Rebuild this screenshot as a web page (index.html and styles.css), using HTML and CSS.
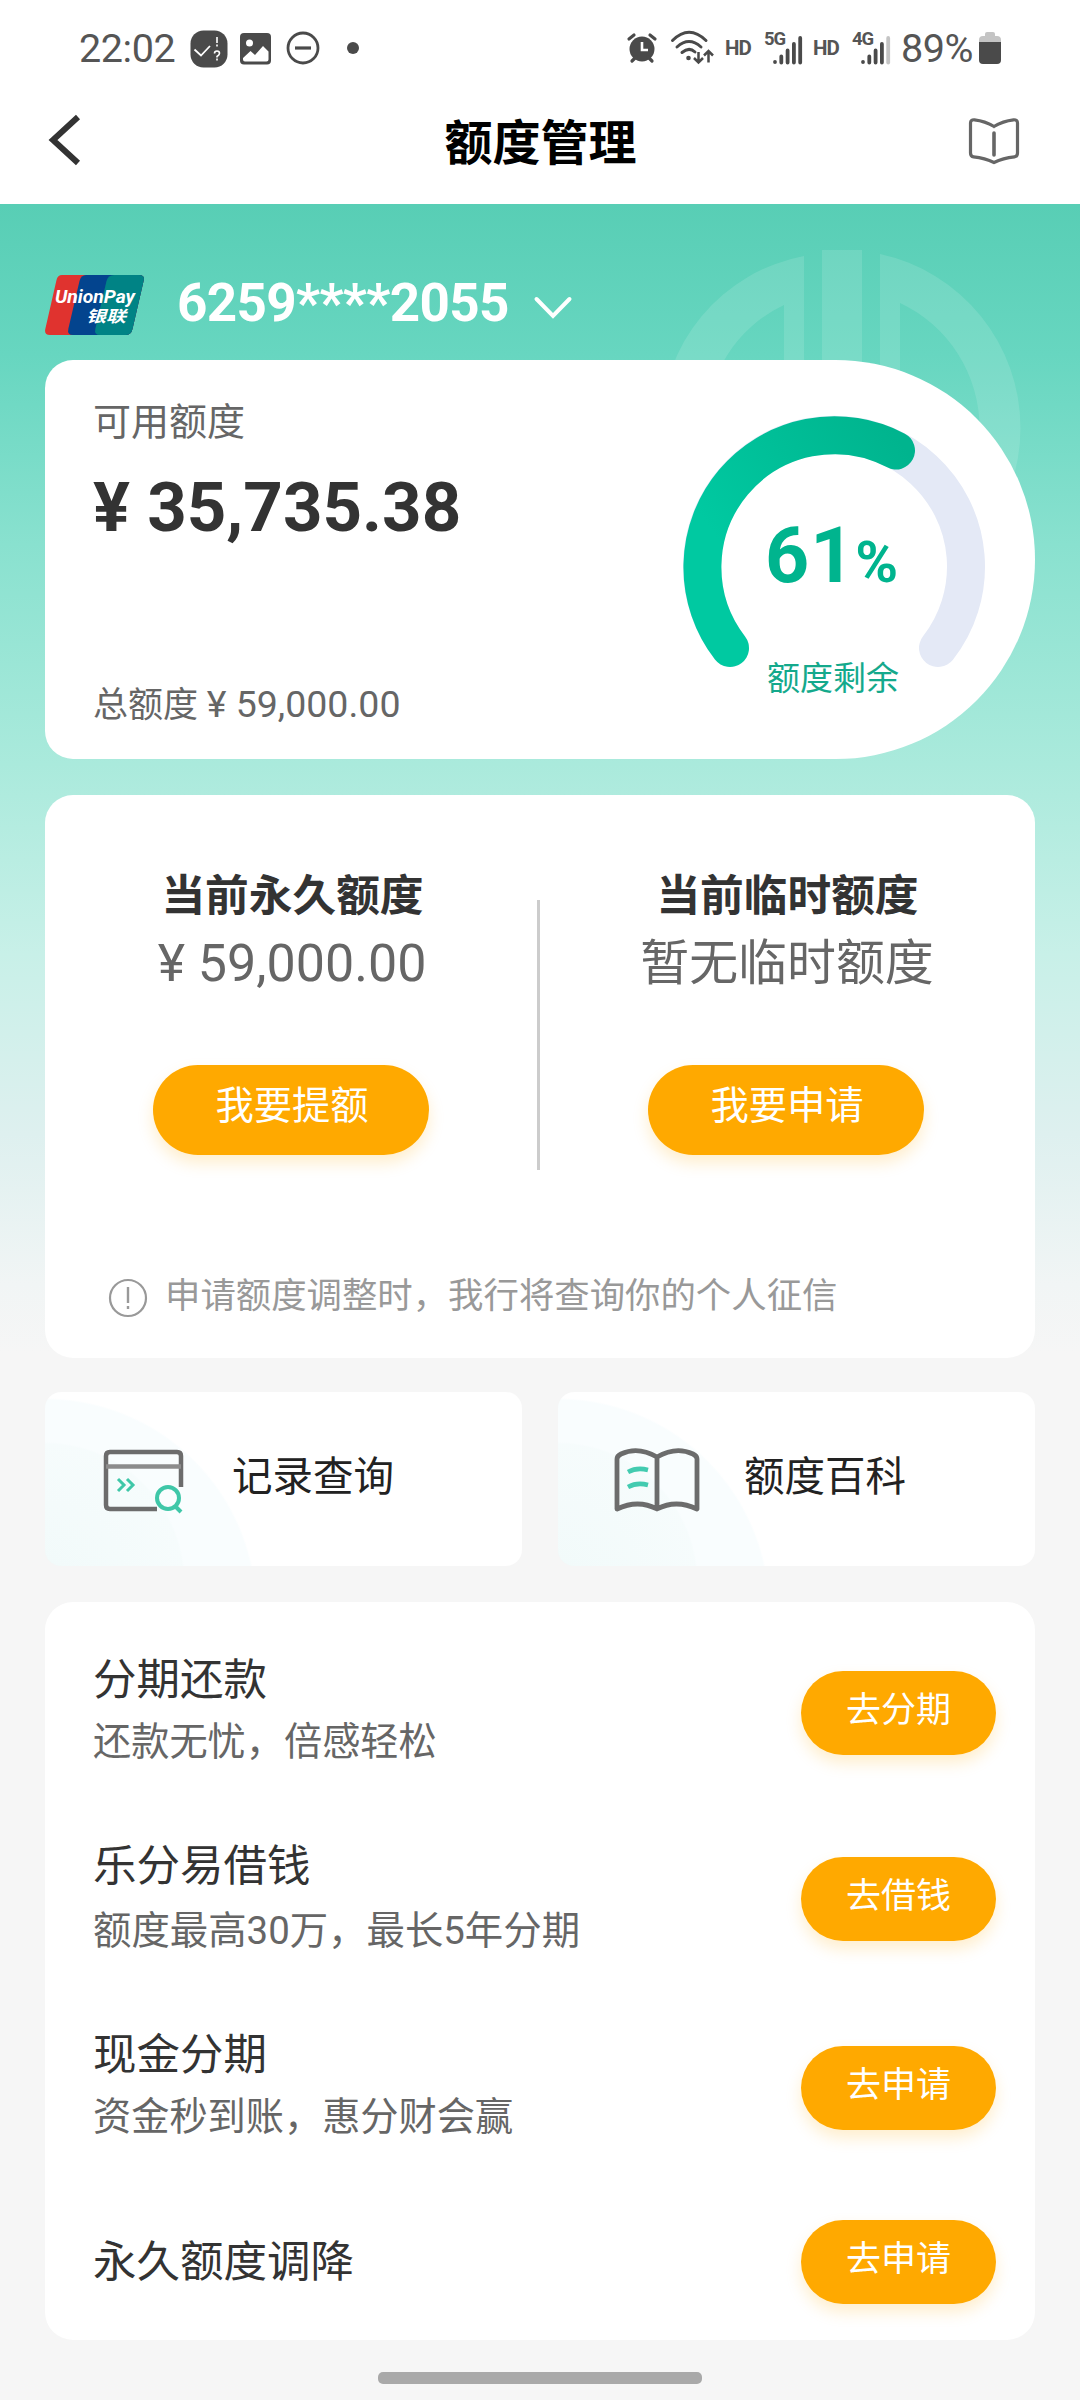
FILE: index.html
```html
<!DOCTYPE html>
<html lang="zh-CN">
<head>
<meta charset="utf-8">
<title>额度管理</title>
<link rel="stylesheet" href="styles.css">
</head>
<body>
<div class="status">
  <span class="clock">22:02</span>
  <svg class="st-badge" width="38" height="38" viewBox="0 0 38 38"><rect width="37" height="37" x=".5" y=".5" rx="13" fill="#4a4a4a"/><path d="M4.500 19.500l6.500 6L20 16" fill="none" stroke="#fff" stroke-width="1.800"/><path d="M27 7v6M27 14.500v2M24.500 23.500q0-2.500 2.500-2.500t2.500 2.300q0 1.500-2.500 3.200v1M27 28.500v2" fill="none" stroke="#fff" stroke-width="1.600"/></svg>
  <svg class="st-photo" width="32" height="32" viewBox="0 0 32 32"><rect width="31" height="31.500" rx="4" fill="#4a4a4a"/><circle cx="9.500" cy="10" r="3.500" fill="#fff"/><path d="M3 26.500v-1.500l7.500-7 4.500 4L23 13l5.500 5.500v8q0 2-2 2H5q-2 0-2-2z" fill="#fff"/></svg>
  <svg class="st-dnd" width="34" height="34" viewBox="0 0 34 34"><circle cx="17" cy="17" r="15" fill="none" stroke="#4a4a4a" stroke-width="2.800"/><path d="M9 17h16" stroke="#4a4a4a" stroke-width="3.200"/></svg>
  <span class="st-dot"></span>
  <div class="st-right">
    <svg class="st-alarm" width="30" height="32" viewBox="0 0 30 32"><circle cx="15" cy="17" r="12.500" fill="#4a4a4a"/><path d="M2 7l5-4M28 7l-5-4M5 29l4-4M25 29l-4-4" stroke="#4a4a4a" stroke-width="3.200" stroke-linecap="round"/><path d="M15 10v8h6" fill="none" stroke="#fff" stroke-width="2.600"/></svg>
    <svg class="st-wifi" width="46" height="36" viewBox="0 0 46 36"><g fill="none" stroke="#4a4a4a" stroke-width="3" stroke-linecap="round"><path d="M2.500 10.500Q19-6 36 10.500M7 17Q19 6 31 17M12 22.500Q19 16.500 25 22"/></g><circle cx="18.500" cy="28" r="2.300" fill="#4a4a4a"/><path d="M28.500 22v10M24 28l4.500 4.500L33 28M38.500 32.500v-11M34 25.500l4.500-4.500 4.500 4.500" fill="none" stroke="#4a4a4a" stroke-width="2.500"/></svg>
    <span class="hd">HD</span>
    <span class="cell"><b>5G</b><svg width="31" height="30" viewBox="0 0 31 30"><g stroke="#4a4a4a" stroke-width="3.800" stroke-linecap="round"><path d="M3 27v.1M9.300 21.500v6M15.600 15.500v12M21.900 9v18.500M28.200 3v24.500"/></g></svg></span>
    <span class="hd">HD</span>
    <span class="cell"><b>4G</b><svg width="31" height="30" viewBox="0 0 31 30"><g stroke="#4a4a4a" stroke-width="3.800" stroke-linecap="round"><path d="M3 27v.1M9.300 21.500v6M15.600 15.500v12M21.900 9v18.500"/><path d="M28.200 3v24.500" stroke="#c4c4c4"/></g></svg></span>
    <span class="pct">89%</span>
    <svg class="st-batt" width="22" height="33" viewBox="0 0 22 33"><path d="M6 4V2q0-2 2-2h6q2 0 2 2v2h2q4 0 4 4v4H0V8q0-4 4-4z" fill="#c4c4c4"/><path d="M0 10h22v18q0 4-4 4H4q-4 0-4-4z" fill="#4a4a4a"/></svg>
  </div>
</div>
<header class="nav">
  <svg class="back" width="32" height="50" viewBox="0 0 32 50"><path d="M30 2L5 25l25 23" fill="none" stroke="#333" stroke-width="6"/></svg>
  <h1>额度管理</h1>
  <svg class="manual" width="52" height="46" viewBox="0 0 52 46"><path d="M2.500 5q0-3.500 4-3.200Q17 3 26 8.500 35 3 45.500 1.800q4-.3 4 3.200v30q0 3.500-3 3.800Q35 40 26 44.500 17 40 5.500 38.800q-3-.3-3-3.800z" fill="none" stroke="#666" stroke-width="3.200"/><path d="M26 15v22" stroke="#666" stroke-width="3.600" stroke-linecap="round"/></svg>
</header>
<main class="page">
  <svg class="mark" width="360" height="360" viewBox="0 0 360 360"><g fill="#fff" fill-opacity=".12"><path d="M143 7A175 175 0 0 0 143 351V7zM123 56V302A136 136 0 0 1 123 56z" fill-rule="evenodd"/><path d="M219 5A178 178 0 0 1 219 353V5zM239 54V304A138 138 0 0 0 239 54z" fill-rule="evenodd"/><path d="M161 1h40v358h-40z"/></g></svg>
  <div class="picker">
    <svg class="unionpay" width="99" height="60" viewBox="0 0 99 60"><defs><clipPath id="card"><path d="M17 0H94q6 0 4.700 5.500L87.500 54q-1.300 6-7 6H5q-6 0-4.700-6L11.500 5Q12.700 0 17 0z"/></clipPath></defs><g clip-path="url(#card)"><path d="M0 0h99v60H0z" fill="#e0332f"/><path d="M41 0H99V60H28q-6 0-4.700-6L34.500 6Q36 0 41 0z" fill="#03448e"/><path d="M69 0H99V60H55q-6 0-4.700-6L61.500 6Q63 0 69 0z" fill="#008385"/></g><text x="10" y="28" textLength="80" lengthAdjust="spacingAndGlyphs" class="up-en">UnionPay</text><text x="41" y="46.500" textLength="40" lengthAdjust="spacingAndGlyphs" class="up-cn">银联</text></svg>
    <span class="number">6259****2055</span>
    <svg class="caret" width="38" height="24" viewBox="0 0 38 24"><path d="M2.500 3L19 20 35.500 3" fill="none" stroke="#fff" stroke-width="4" stroke-linecap="round"/></svg>
  </div>
  <section class="balance">
    <div class="sums">
      <p class="label">可用额度</p>
      <p class="amount">¥ 35,735.38</p>
      <p class="total">总额度 <span>¥ 59,000.00</span></p>
    </div>
    <div class="gauge">
      <svg width="302" height="270" viewBox="-151 -151 302 270"><defs><linearGradient id="arc" x1="0" y1=".8" x2="1" y2="0"><stop offset=".2" stop-color="#00c9a1"/><stop offset="1" stop-color="#00b48e"/></linearGradient></defs><g fill="none" stroke-width="38" stroke-linecap="round"><path d="M-104 81A132 132 0 1 1 104 81" stroke="#e4e9f6"/><path d="M-104 81A132 132 0 0 1 62 -116.500" stroke="url(#arc)"/></g></svg>
      <div class="percent"><b>61</b><i>%</i></div>
      <div class="left">额度剩余</div>
    </div>
  </section>
  <section class="limits">
    <div class="cols">
      <div class="col"><h2>当前永久额度</h2><p class="money">¥ 59,000.00</p><button class="btn big">我要提额</button></div>
      <div class="rule"></div>
      <div class="col"><h2>当前临时额度</h2><p>暂无临时额度</p><button class="btn big">我要申请</button></div>
    </div>
    <div class="notice"><svg width="40" height="40" viewBox="0 0 40 40"><circle cx="20" cy="20" r="18" fill="none" stroke="#999" stroke-width="2.200"/><path d="M20 9v16M20 28v3" stroke="#999" stroke-width="2.400"/></svg><span>申请额度调整时，我行将查询你的个人征信</span></div>
  </section>
  <div class="tiles">
    <div class="tile">
      <svg width="84" height="66" viewBox="0 0 84 66"><g fill="none" stroke="#6c6c6c" stroke-width="4.500"><path d="M78 39V8q0-4-4-4H7Q3 4 3 8V57q0 4 4 4H54"/><path d="M3 18.500h75" stroke="#8c8c8c"/></g><g fill="none" stroke="#3fc7a8" stroke-width="3"><path d="M15 31l6 6-6 6M24 31l6 6-6 6"/><circle cx="65" cy="50" r="11" stroke-width="4"/><path d="M72 58l6 6" stroke-width="4"/></g></svg>
      <span>记录查询</span>
    </div>
    <div class="tile">
      <svg width="86" height="66" viewBox="2 0 86 66"><path d="M43 9Q24-2 7 6 3 8 3 11V61Q24 51 43 61 62 51 83 61V11Q83 8 79 6 62-2 43 9zM43 9V61" fill="none" stroke="#6c6c6c" stroke-width="4.800" stroke-linejoin="round" overflow="visible"/><path d="M14 24q9-5 20-2M14 39q9-5 20-2" fill="none" stroke="#43cbb0" stroke-width="4.500"/></svg>
      <span>额度百科</span>
    </div>
  </div>
  <section class="offers">
    <div class="row"><div><h3>分期还款</h3><p>还款无忧，倍感轻松</p></div><button class="btn">去分期</button></div>
    <div class="row loan"><div><h3>乐分易借钱</h3><p>额度最高30万，最长5年分期</p></div><button class="btn">去借钱</button></div>
    <div class="row"><div><h3>现金分期</h3><p>资金秒到账，惠分财会赢</p></div><button class="btn">去申请</button></div>
    <div class="row last"><div><h3>永久额度调降</h3></div><button class="btn">去申请</button></div>
  </section>
  <div class="home"></div>
</main>
</body>
</html>
```
FILE: styles.css
```css
* { box-sizing: border-box; margin: 0; padding: 0; }
body { width: 1080px; height: 2400px; overflow: hidden; background: #fff; font-family: Roboto, "Noto Sans CJK SC", sans-serif; color: #333; }
svg { display: block; flex: none; overflow: visible; }
.status { height: 78px; padding: 30px 79px 0 79px; display: flex; align-items: flex-start; color: #555; }
.clock { font-size: 39.500px; line-height: 37px; width: 111px; letter-spacing: -.4px; }
.st-photo { margin: 3px 0 0 12px; }
.st-dnd { margin: 1px 0 0 14px; }
.st-dot { width: 12px; height: 12px; border-radius: 50%; background: #4a4a4a; margin: 12px 0 0 27px; }
.st-right { margin-left: auto; display: flex; align-items: flex-start; }
.st-alarm { margin: 2px 13px 0 0; }
.st-wifi { margin-right: 9px; }
.hd { font-size: 20.500px; font-weight: 700; line-height: 36px; width: 39px; letter-spacing: -1px; }
.cell { width: 49px; height: 36px; display: grid; }
.cell > * { grid-area: 1 / 1; }
.cell b { font-size: 18.500px; line-height: 18px; letter-spacing: -1px; }
.cell svg { margin: 5px 0 0 8px; }
.cell + .pct { margin-left: 0; }
.pct { font-size: 39.500px; line-height: 37px; width: 78px; letter-spacing: -.5px; white-space: nowrap; }
.st-batt { margin-top: 2px; }
.nav { height: 126px; padding: 0 60px 0 48px; display: flex; align-items: flex-start; justify-content: space-between; }
.back { margin-top: 37px; }
.nav h1 { font-size: 48px; line-height: 60px; font-weight: 700; color: #000; margin: 36px 0 0 33px; }
.manual { margin-top: 40px; }
.page { position: relative; height: 2196px; padding: 0 45px; background: linear-gradient(#58ceb5 0, #67d6c0 150px, #89e1cf 340px, #aaeadc 560px, #c8f0e8 750px, #def0ef 930px, #f1f5f5 1080px, #f6f6f6 1150px); }
.mark { position: absolute; left: 661px; top: 45px; }
.picker { position: relative; height: 156px; padding-top: 71px; display: flex; align-items: flex-start; }
.up-en { font: italic 700 19px Roboto, sans-serif; fill: #fff; }
.up-cn { font: italic 700 16px "Noto Sans CJK SC", sans-serif; fill: #fff; }
.number { width: 353px; margin: 0 3px 0 33px; font-size: 53px; line-height: 57px; letter-spacing: -.65px; font-weight: 700; color: #fff; white-space: nowrap; }
.caret { margin: 21px 0 0 1px; }
.balance { position: relative; height: 399px; background: #fff; border-radius: 28px 200px 200px 28px; display: flex; justify-content: space-between; padding: 0 50px 0 48px; }
.sums { padding-top: 35px; }
.label { font-size: 38px; line-height: 54px; color: #666; }
.amount { font-size: 69px; line-height: 80px; font-weight: 700; margin-top: 19px; white-space: nowrap; }
.total { font-size: 35px; line-height: 50px; color: #666; margin-top: 131px; }
.total span { font-size: 37.500px; }
.gauge { width: 302px; padding-top: 56px; display: grid; grid-template-rows: 90px 100px 80px; }
.gauge svg { grid-area: 1 / 1 / 4 / 2; }
.percent { grid-area: 2 / 1; display: flex; align-items: baseline; color: #00b48e; padding: 5px 0 0 82px; line-height: 90px; }
.percent b { font-size: 77px; letter-spacing: 1px; }
.percent i { font-style: normal; font-weight: 700; font-size: 58px; }
.left { grid-area: 3 / 1; text-align: center; font-size: 33px; line-height: 48px; color: #14a98c; padding: 49px 2px 0 0; }
.limits { height: 563px; margin-top: 36px; background: #fff; border-radius: 28px; padding-top: 71px; }
.cols { display: flex; padding-right: 3px; }
.col { flex: 1; display: flex; flex-direction: column; align-items: center; }
.rule { width: 3px; height: 270px; background: #ccc; margin-top: 34px; }
h2 { font-size: 43.700px; line-height: 60px; font-weight: 700; padding-left: 3px; }
.col p { font-size: 48.900px; line-height: 72px; color: #666; padding: 2px 0 0 2px; }
.col .money { font-size: 52px; }
.btn { border: 0; width: 195px; height: 84px; border-radius: 42px; background: #ffa900; color: #fff; font: 35px/50px "Noto Sans CJK SC", sans-serif; padding-bottom: 12px; box-shadow: 0 8px 16px rgba(255, 169, 0, .2); }
.big { width: 276px; height: 90px; border-radius: 45px; font-size: 38.300px; margin-top: 65px; padding: 0 0 14px 2px; }
.notice { display: flex; align-items: center; gap: 17px; margin: 104px 0 0 63px; color: #999; font-size: 35.400px; line-height: 50px; }
.notice span { margin-top: -3px; }
.tiles { display: flex; gap: 36px; margin-top: 34px; }
.tile { flex: 1; height: 174px; border-radius: 16px; display: flex; align-items: center; padding-left: 58px; font-size: 40.500px; color: #222; background: radial-gradient(circle at 0 190px, rgba(236, 248, 247, .6) 0, rgba(244, 251, 251, .6) 138px, transparent 140px), radial-gradient(circle at 0 218px, #f9fdfe 0, #f9fdfe 210px, #fff 212px); }
.tile span { margin: -12px 0 0 45px; }
.tile + .tile span { margin-left: 42px; }
.tile svg { margin-top: 4px; }
.offers { height: 738px; margin-top: 36px; background: #fff; border-radius: 28px; padding: 45px 39px 0 48px; }
.row { display: flex; justify-content: space-between; align-items: flex-start; height: 186px; }
.row .btn { margin-top: 24px; }
h3 { font-size: 43.500px; line-height: 64px; font-weight: 400; margin-top: 2px; }
.row p { font-size: 38.200px; line-height: 60px; color: #666; margin-top: -1px; }
.loan { height: 189px; }
.row.loan p { margin-top: 2px; font-size: 38.400px; }
.last { height: 120px; }
.last .btn { margin-top: 12px; }
.last h3 { margin-top: 23px; }
.home { width: 324px; height: 12px; border-radius: 5px; background: #a9a9a9; margin: 32px auto 0; }
```
